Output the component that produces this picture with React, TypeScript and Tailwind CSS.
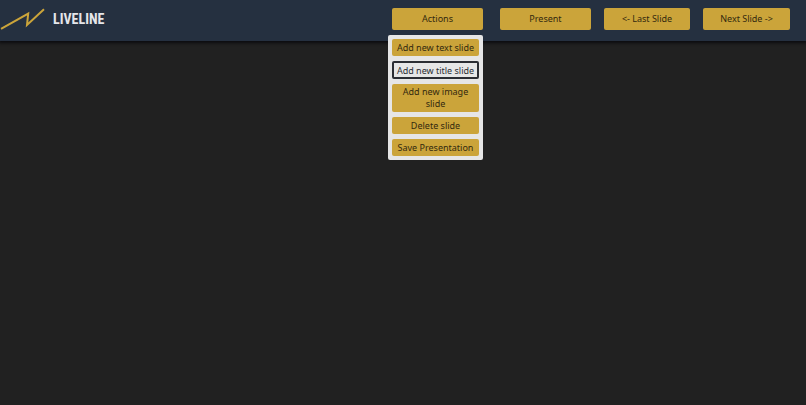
import { useState } from 'react';
import clsx from 'clsx';

const menuItems = [
  'Add new text slide',
  'Add new title slide',
  'Add new image slide',
  'Delete slide',
  'Save Presentation',
];

const barButton = 'h-[22px] rounded-xs bg-[#cba43a] text-[#33290f] cursor-pointer';

function Logo() {
  return (
    <a href="#" className="flex items-center gap-2">
      <svg width="45" height="22" viewBox="0 0 45 22" fill="none" aria-hidden="true">
        <path
          d="M1 20.8L28.2 5.6L27 17L44 1.2"
          stroke="#cba43a"
          strokeWidth="2"
        />
      </svg>
      <span className="font-['Roboto_Condensed','Open_Sans_Condensed','Noto_Sans_Condensed','Roboto',sans-serif] text-[14px] leading-[22px] font-bold text-[#e5e6ea]">
        LIVELINE
      </span>
    </a>
  );
}

function ActionsMenu() {
  const [selected, setSelected] = useState('Add new title slide');

  return (
    <div className="relative mr-[17px]">
      <button type="button" aria-haspopup="menu" aria-expanded="true" className={clsx(barButton, 'w-[91px]')}>
        Actions
      </button>
      {/* Dropdown */}
      <div
        role="menu"
        className="absolute top-[27px] right-0 flex w-[95px] flex-col gap-[5px] rounded-xs bg-[#e6e6e6] p-1"
      >
        {menuItems.map((item) => (
          <button
            key={item}
            type="button"
            role="menuitem"
            onClick={() => setSelected(item)}
            className={clsx(
              'cursor-pointer rounded-xs leading-3',
              item === selected
                ? 'min-h-[18px] border-2 border-[#2b2d33] bg-[#e6e6e6] pt-px text-[#2b2d33]'
                : 'min-h-[17px] bg-[#cba43a] px-1 py-0.5 text-[#33290f]',
            )}
          >
            {item}
          </button>
        ))}
      </div>
    </div>
  );
}

export default function App() {
  return (
    <div className="min-h-screen bg-[#212121] font-['Noto_Sans',sans-serif] text-[9px]">
      <header className="flex items-start justify-between bg-[#253040] pt-2 pr-4 pb-[11px] shadow-[0_1px_3px_1px_#0b0b0f]">
        <Logo />
        <nav className="flex">
          <ActionsMenu />
          <div className="flex gap-[13px]">
            <button type="button" className={clsx(barButton, 'w-[91px]')}>
              Present
            </button>
            <button type="button" className={clsx(barButton, 'w-[86px]')}>
              {'<- Last Slide'}
            </button>
            <button type="button" className={clsx(barButton, 'w-[87px]')}>
              {'Next Slide ->'}
            </button>
          </div>
        </nav>
      </header>
    </div>
  );
}
